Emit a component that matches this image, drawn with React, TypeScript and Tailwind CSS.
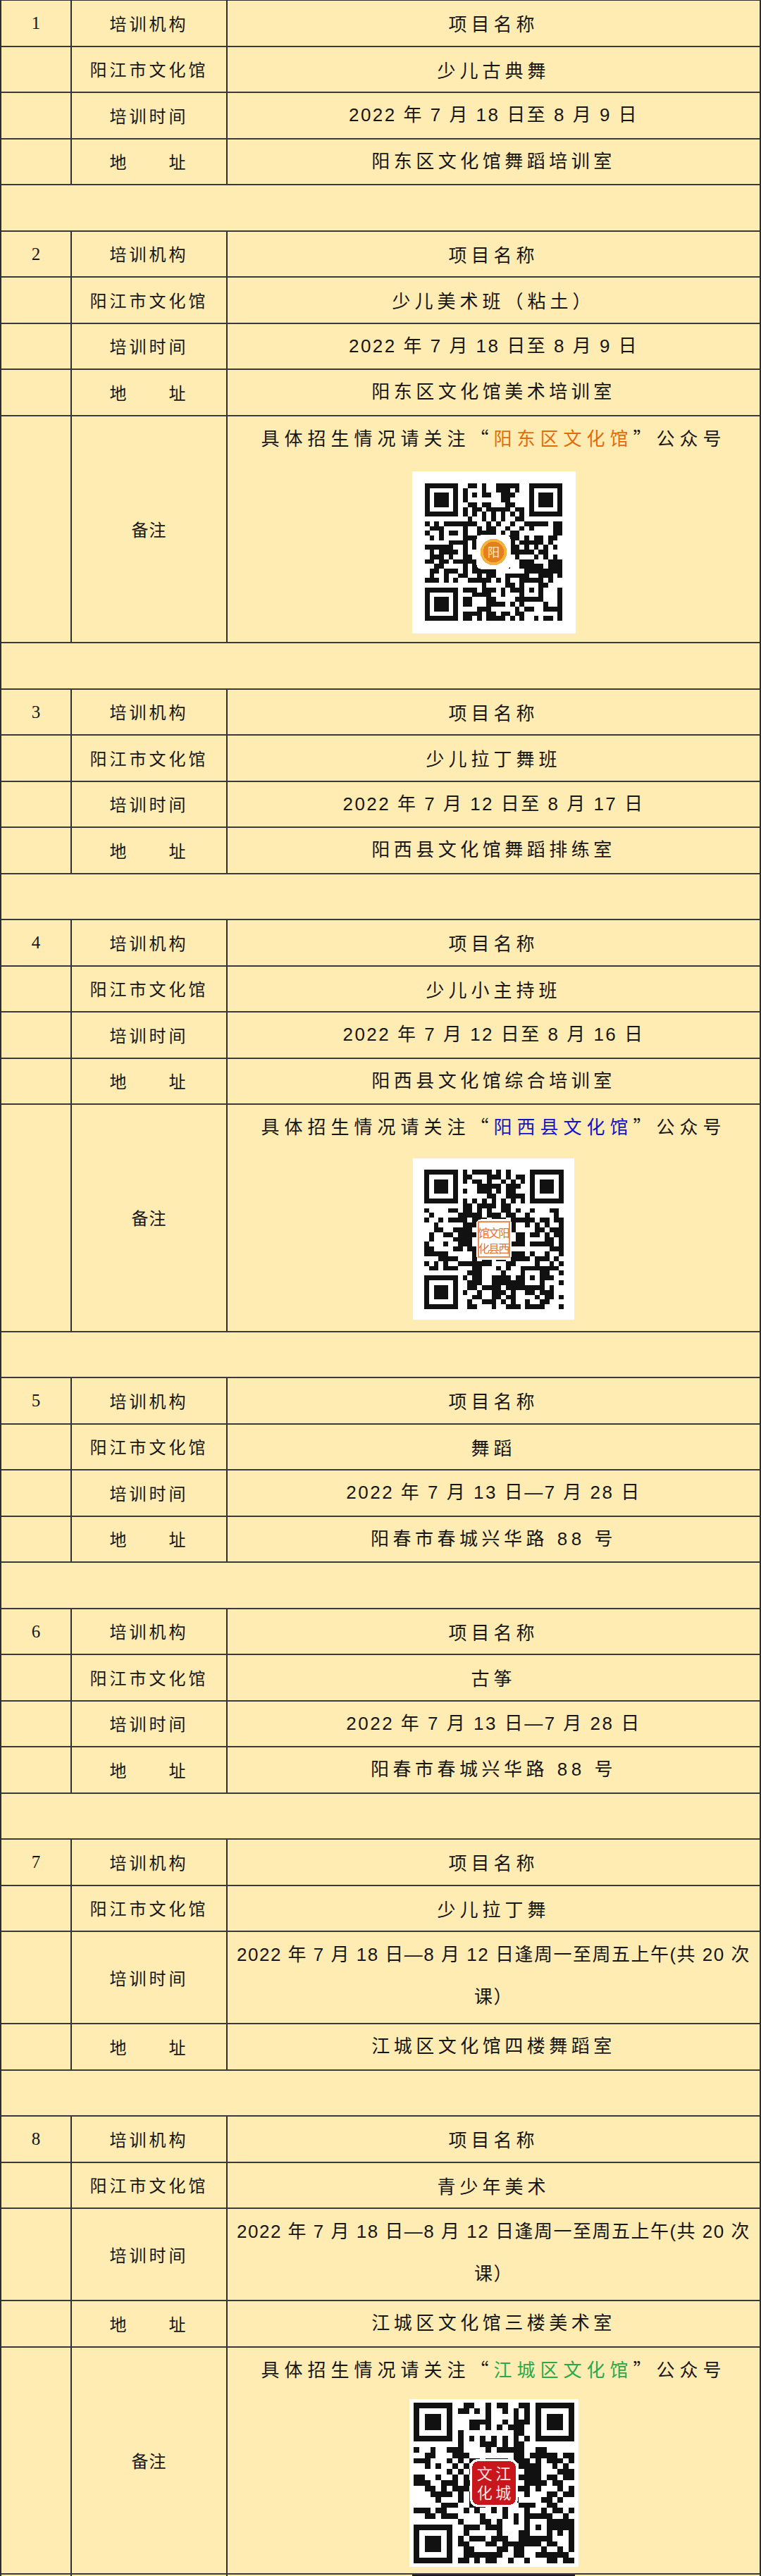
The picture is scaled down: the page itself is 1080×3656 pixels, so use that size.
import { useMemo } from 'react'

type Remark = { org: string; color: string; qr: 'yd' | 'yx' | 'jc' }

type Block = {
  no: number
  name: string
  time: string[]
  address: string
  remark?: Remark
}

const blocks: Block[] = [
  {
    no: 1,
    name: '少儿古典舞',
    time: ['2022 年 7 月 18 日至 8 月 9 日'],
    address: '阳东区文化馆舞蹈培训室',
  },
  {
    no: 2,
    name: '少儿美术班（粘土）',
    time: ['2022 年 7 月 18 日至 8 月 9 日'],
    address: '阳东区文化馆美术培训室',
    remark: { org: '阳东区文化馆', color: 'text-[#e36c0a]', qr: 'yd' },
  },
  {
    no: 3,
    name: '少儿拉丁舞班',
    time: ['2022 年 7 月 12 日至 8 月 17 日'],
    address: '阳西县文化馆舞蹈排练室',
  },
  {
    no: 4,
    name: '少儿小主持班',
    time: ['2022 年 7 月 12 日至 8 月 16 日'],
    address: '阳西县文化馆综合培训室',
    remark: { org: '阳西县文化馆', color: 'text-[#1414c8]', qr: 'yx' },
  },
  {
    no: 5,
    name: '舞蹈',
    time: ['2022 年 7 月 13 日—7 月 28 日'],
    address: '阳春市春城兴华路 88 号',
  },
  {
    no: 6,
    name: '古筝',
    time: ['2022 年 7 月 13 日—7 月 28 日'],
    address: '阳春市春城兴华路 88 号',
  },
  {
    no: 7,
    name: '少儿拉丁舞',
    time: ['2022 年 7 月 18 日—8 月 12 日逢周一至周五上午(共 20 次', '课）'],
    address: '江城区文化馆四楼舞蹈室',
  },
  {
    no: 8,
    name: '青少年美术',
    time: ['2022 年 7 月 18 日—8 月 12 日逢周一至周五上午(共 20 次', '课）'],
    address: '江城区文化馆三楼美术室',
    remark: { org: '江城区文化馆', color: 'text-[#2aa84a]', qr: 'jc' },
  },
]

const ROW = 'flex border-b-2 border-[#3a3a3a]'
const C1 = 'flex w-[100px] shrink-0 items-center justify-center border-r-2 border-[#2e2e2e]'
const C2 = 'flex w-[221px] shrink-0 items-center justify-center border-r-2 border-[#2e2e2e]'
const C3 = 'flex flex-1 items-center justify-center'
const CJK = "[font-family:'Noto_Sans_CJK_SC',sans-serif]"

function makeQr(seed: number, n: number) {
  let s = seed
  const rnd = () => {
    s = (s + 0x6d2b79f5) | 0
    let t = Math.imul(s ^ (s >>> 15), 1 | s)
    t = (t + Math.imul(t ^ (t >>> 7), 61 | t)) ^ t
    return ((t ^ (t >>> 14)) >>> 0) / 4294967296
  }
  const g: boolean[][] = []
  for (let y = 0; y < n; y++) {
    const row: boolean[] = []
    for (let x = 0; x < n; x++) row.push(rnd() < 0.5)
    g.push(row)
  }
  // timing lines
  for (let i = 0; i < n; i++) {
    g[6][i] = i % 2 === 0
    g[i][6] = i % 2 === 0
  }
  const finder = (ox: number, oy: number) => {
    for (let y = -1; y <= 7; y++)
      for (let x = -1; x <= 7; x++) {
        const X = ox + x
        const Y = oy + y
        if (X < 0 || Y < 0 || X >= n || Y >= n) continue
        const d = Math.max(Math.abs(x - 3), Math.abs(y - 3))
        g[Y][X] = d <= 1 || d === 3
      }
  }
  finder(0, 0)
  finder(n - 7, 0)
  finder(0, n - 7)
  const a = n - 7
  for (let y = -2; y <= 2; y++)
    for (let x = -2; x <= 2; x++) {
      const d = Math.max(Math.abs(x), Math.abs(y))
      g[a + y][a + x] = d !== 1
    }
  return g
}

function QrLogo({ kind, n }: { kind: Remark['qr']; n: number }) {
  const c = n / 2
  if (kind === 'yd') {
    return (
      <g>
        <rect x={c - 3.6} y={c - 3.6} width={7.2} height={7.2} rx={1} fill="#fff" />
        <circle cx={c} cy={c} r={2.8} fill="#f3b23a" />
        <circle cx={c} cy={c} r={2.2} fill="#e57f1c" />
        <text
          x={c}
          y={c + 1}
          textAnchor="middle"
          fontSize={2.6}
          fill="#fde7c0"
          fontFamily="Noto Sans CJK SC, sans-serif"
        >
          阳
        </text>
      </g>
    )
  }
  if (kind === 'yx') {
    return (
      <g>
        <rect x={c - 3.7} y={c - 4.2} width={7.4} height={8.4} rx={1} fill="#fff" />
        <rect x={c - 3.2} y={c - 3.7} width={6.4} height={7.4} fill="none" stroke="#ec8a52" strokeWidth={0.25} />
        {['馆', '文', '阳'].map((ch, i) => (
          <text
            key={ch}
            x={c - 2.1 + i * 2.1}
            y={c - 0.5}
            textAnchor="middle"
            fontSize={2.4}
            fill="#e8733a"
            fontFamily="Noto Sans CJK SC, sans-serif"
          >
            {ch}
          </text>
        ))}
        {['化', '县', '西'].map((ch, i) => (
          <text
            key={ch}
            x={c - 2.1 + i * 2.1}
            y={c + 2.8}
            textAnchor="middle"
            fontSize={2.4}
            fill="#e8733a"
            fontFamily="Noto Sans CJK SC, sans-serif"
          >
            {ch}
          </text>
        ))}
      </g>
    )
  }
  return (
    <g>
      <rect x={c - 4.3} y={c - 4.3} width={8.6} height={8.6} rx={1.2} fill="#fff" />
      <rect x={c - 3.9} y={c - 3.9} width={7.8} height={7.8} rx={1} fill="#c8161d" />
      {[
        ['文', c - 1.7, c - 0.6],
        ['化', c - 1.7, c + 2.8],
        ['江', c + 1.7, c - 0.6],
        ['城', c + 1.7, c + 2.8],
      ].map(([ch, x, y]) => (
        <text
          key={ch as string}
          x={x as number}
          y={y as number}
          textAnchor="middle"
          fontSize={2.8}
          fill="#fbe3e3"
          fontFamily="Noto Sans CJK SC, sans-serif"
        >
          {ch}
        </text>
      ))}
    </g>
  )
}

function QrCode({ kind }: { kind: Remark['qr'] }) {
  const n = 29
  const seed = kind === 'yd' ? 11 : kind === 'yx' ? 47 : 93
  const g = useMemo(() => makeQr(seed, n), [seed])
  const box =
    kind === 'yd'
      ? 'mt-[18px] h-[230px] w-[232px]'
      : kind === 'yx'
        ? 'mt-[16px] h-[229px] w-[229px]'
        : 'mt-[13px] h-[238px] w-[240px]'
  const size = kind === 'yd' ? 195 : kind === 'yx' ? 198 : 228
  return (
    <div className={`flex items-center justify-center bg-white ${box}`}>
      <svg width={size} height={size} viewBox={`0 0 ${n} ${n}`} shapeRendering="crispEdges">
        {g.flatMap((row, y) =>
          row.map((on, x) => (on ? <rect key={`${x}-${y}`} x={x} y={y} width={1} height={1} fill="#111" /> : null)),
        )}
        <QrLogo kind={kind} n={n} />
      </svg>
    </div>
  )
}

function Line({ left, no, children }: { left: string; no?: number; children: React.ReactNode }) {
  return (
    <div className={`${ROW} h-[65.5px]`}>
      <div className={`${C1} text-[25px] [font-family:'Liberation_Serif',serif]`}>{no}</div>
      <div className={`${C2} ${CJK} text-[24px] tracking-[4px]`}>{left}</div>
      <div className={C3}>{children}</div>
    </div>
  )
}

function BlockView({ b }: { b: Block }) {
  const long = b.time.length > 1
  return (
    <>
      <Line left="培训机构" no={b.no}>
        <span className={`${CJK} text-[26px] tracking-[6px]`}>项目名称</span>
      </Line>
      <Line left="阳江市文化馆">
        <span className={`${CJK} text-[26px] tracking-[6px]`}>{b.name}</span>
      </Line>
      {long ? (
        <div className={`${ROW} h-[131px]`}>
          <div className={C1} />
          <div className={`${C2} ${CJK} text-[24px] tracking-[4px]`}>培训时间</div>
          <div className="flex flex-1 flex-col items-center justify-center pb-[6px] text-[26px] tracking-[1.5px]">
            <span className="whitespace-nowrap leading-[60px]">{b.time[0]}</span>
            <span className="leading-[60px]">{b.time[1]}</span>
          </div>
        </div>
      ) : (
        <Line left="培训时间">
          <span className="text-[26px] tracking-[2.5px]">{b.time[0]}</span>
        </Line>
      )}
      <Line left="地　　址">
        <span className="text-[26px] tracking-[5.5px]">{b.address}</span>
      </Line>
      {b.remark && (
        <div className={`${ROW} h-[322.5px]`}>
          <div className={C1} />
          <div className={`${C2} ${CJK} text-[24px] tracking-[1px]`}>备注</div>
          <div className="flex flex-1 flex-col items-center">
            <div className={`${CJK} h-[60px] text-[26px] leading-[60px] tracking-[7px]`}>
              具体招生情况请关注“<span className={b.remark.color}>{b.remark.org}</span>”公众号
            </div>
            <QrCode kind={b.remark.qr} />
          </div>
        </div>
      )}
      {b.no < 8 && <div className={`${ROW} h-[65.5px]`} />}
    </>
  )
}

export default function App() {
  return (
    <div className="min-h-[3656px] w-[1080px] bg-white">
      <div className="border-x-2 border-t border-[#2e2e2e] bg-[#ffecb3] text-[#161616] [font-family:'Liberation_Sans','Noto_Sans_CJK_SC',sans-serif]">
        {blocks.map((b) => (
          <BlockView key={b.no} b={b} />
        ))}
        <div className={`${ROW} h-[65.5px]`}>
          <div className={C1} />
          <div className={C2} />
          <div className="flex flex-1 justify-center">
            <div className="h-[40px] w-[231px] bg-[#1c1c1c]" />
          </div>
        </div>
      </div>
    </div>
  )
}
